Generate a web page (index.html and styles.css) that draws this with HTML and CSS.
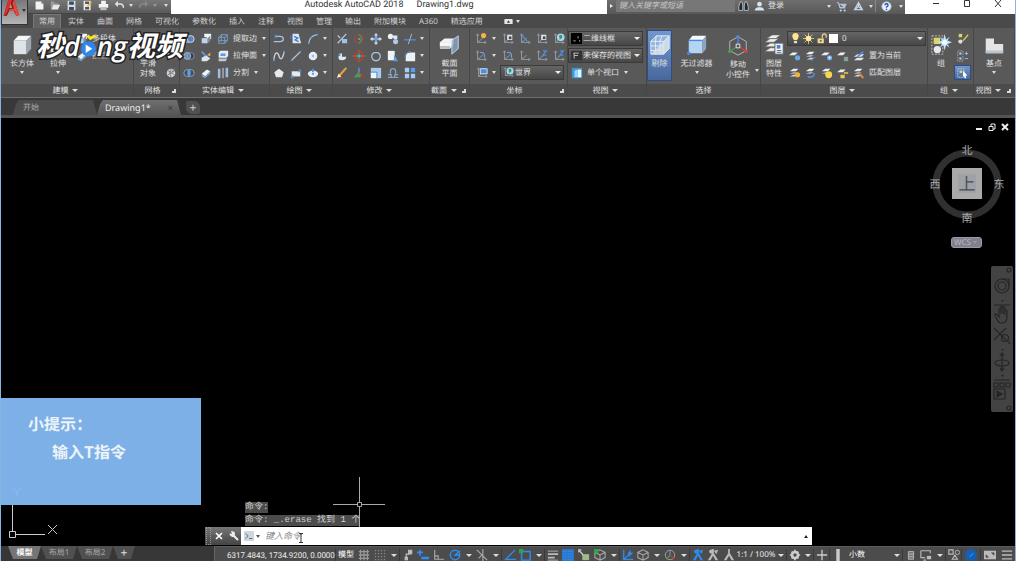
FILE: index.html
```
<!DOCTYPE html>
<html lang="zh-CN">
<head>
    <meta charset="UTF-8">
    <meta name="viewport" content="width=device-width, initial-scale=1.0">
    <title>Autodesk AutoCAD 2018 - Drawing1.dwg</title>
    <link rel="stylesheet" href="styles.css">
</head>
<body>
    <!-- icon sprite -->
    <svg class="sprite" aria-hidden="true">
        <symbol id="new" viewBox="0 0 14 14"><path fill="#f4f4f4" d="M2 2h7l3 3v7H2z"/><path fill="#aaa" d="M9 2v3h3z"/></symbol>
        <symbol id="open" viewBox="0 0 14 14"><path fill="#9a9a9a" d="M1 2h4l1 2h5v2H4l-2 6H1z"/><path fill="#e8e8e8" d="M4 6h9l-3 6H2z"/></symbol>
        <symbol id="save" viewBox="0 0 14 14"><path fill="#d4dbe4" d="M2 1h10v12H2z"/><path fill="#3b4a5c" d="M4 2h6v4H4zM4 9h6v4H4z"/></symbol>
        <symbol id="saveas" viewBox="0 0 14 14"><path fill="#e6e6e6" d="M2 1h9v12H2z"/><path fill="#555" d="M4 2h5v3H4zM4 9h5v3H4z"/><path stroke="#f0b040" stroke-width="2" d="M7 8l5-5"/></symbol>
        <symbol id="print" viewBox="0 0 14 14"><path fill="#f5f5f5" d="M4 1h6v4H4zM1 5h12v5H1z"/><path fill="#bbb" d="M3 9h8v4H3z"/></symbol>
        <symbol id="undo" viewBox="0 0 14 14"><path fill="none" stroke="currentColor" stroke-width="2" d="M3 5h5q4 0 4 5"/><path fill="currentColor" d="M1 5l4-4v8z"/></symbol>
        <symbol id="redo" viewBox="0 0 14 14"><path fill="none" stroke="#888" stroke-width="2" d="M11 5H6q-4 0-4 5"/><path fill="#888" d="M13 5L9 1v8z"/></symbol>
        <symbol id="bino" viewBox="0 0 14 14"><path fill="#202830" stroke="#ccd4dc" d="M3 1h2l1 4v7H1V7zM9 1h2l2 6v5H8V5z"/></symbol>
        <symbol id="user" viewBox="0 0 14 14"><circle cx="7" cy="4" r="3" fill="#d8e4f0"/><path fill="#d8e4f0" d="M1 12q0-3 4-4h4q4 1 4 4z"/></symbol>
        <symbol id="cart" viewBox="0 0 14 14"><path fill="#b9cbe0" stroke="#b9cbe0" d="M1 2h2l2 7h7M4 4h9l-2 4H5z"/><circle cx="6" cy="12" r="1.3" fill="#cde"/><circle cx="11" cy="12" r="1.3" fill="#cde"/></symbol>
        <symbol id="share" viewBox="0 0 14 14"><path fill="none" stroke="#c3d4ea" stroke-width="1.6" d="M7 2L2 11h10zM7 2v5M2 11l5-4 5 4"/></symbol>
        <symbol id="help" viewBox="0 0 14 14"><circle cx="7" cy="7" r="6" fill="#e9f1fb" stroke="#9bb5d6"/><path fill="none" stroke="#24509a" stroke-width="1.7" d="M5 5.5q0-2 2-2t2 2q0 1-2 2.200v1M7 9.800v1.500"/></symbol>

        <symbol id="box" viewBox="0 0 24 24"><path fill="#f5f7f9" d="M3 7l5-5h14l-5 5z"/><path fill="#dfe4e9" d="M3 7h14v15H3z"/><path fill="#9da5ae" d="M17 7l5-5v14l-5 6z"/></symbol>
        <symbol id="extrude" viewBox="0 0 24 24"><path fill="#dfe4e9" d="M4 15h12v7H4z"/><path fill="#9bb9dd" d="M5 8l4-5h11l-4 5v7H5z"/></symbol>
        <symbol id="section" viewBox="0 0 24 24"><path fill="#f3f3f3" d="M1 9l5-4h10v6l-4 5H1z"/><path fill="#b9bec4" d="M1 9h11v7H1z"/><path fill="#f7f7f7" d="M1 9h11v4H1z"/><path fill="#8aa5c4" fill-opacity=".8" stroke="#c9d8e8" d="M14 7l7-5v14l-7 6z"/></symbol>
        <symbol id="cull" viewBox="0 0 24 24"><path fill="#93b4dd" stroke="#e9f1fb" d="M2 8l6-6h14v14l-6 6H2zM2 8h14v14M16 8l6-6M7 8v14M2 13h14M2 18h14M12 8v14M8 2L7 8M14 2l-2 6"/><path fill="#dde2e8" d="M2 22L16 8v14zM16 8l6-6v14l-6 6z" fill-opacity=".8"/></symbol>
        <symbol id="nofilter" viewBox="0 0 24 24"><path fill="#f4f8fb" d="M3 7l4-5h15l-4 5z"/><path fill="#b5d4f2" d="M3 7h15v14H3z"/><path fill="#8ea6bd" d="M18 7l4-5v14l-4 5z"/><path stroke="#3e8de8" stroke-width="1.500" d="M3 7h15"/><circle cx="3" cy="21" r="2" fill="#3e8de8"/></symbol>
        <symbol id="gizmo" viewBox="0 0 24 24"><path fill="none" stroke="#bbb" d="M12 2l9 5v10l-9 5-9-5V7z"/><path stroke="#4f86d8" stroke-width="1.500" d="M12 12V2"/><path stroke="#4b9b4b" stroke-width="1.500" d="M12 12l-9 6"/><path stroke="#c9463c" stroke-width="1.500" d="M12 12l9 6"/><path fill="#555" stroke="#eee" d="M10 10h4v4h-4z"/><circle cx="12" cy="2" r="2" fill="#4f86d8"/><circle cx="3" cy="18" r="2" fill="#4b9b4b"/><circle cx="21" cy="18" r="2" fill="#c9463c"/></symbol>
        <symbol id="layerprop" viewBox="0 0 24 24"><path fill="#eee" stroke="#666" stroke-width=".7" d="M2 14l6-4h9l-5 4zM2 9l6-4h9l-5 4zM4 5l6-4h9l-5 4zM2 19l6-4h7l-3 4z"/><path fill="#f5f5f5" stroke="#567" d="M13 10h9v12h-9z"/><path fill="#4a86d0" d="M15 12h4v4h-4z"/><path stroke="#567" d="M15 18h5M15 20h5"/></symbol>
        <symbol id="group" viewBox="0 0 24 24"><path fill="none" stroke="#ccc" stroke-dasharray="2 1.500" d="M2 2h12v20H2z"/><path fill="#d8d668" d="M4 4h7v7H4z"/><circle cx="8" cy="17" r="4" fill="#e6eaef"/><path fill="#bfe6ff" d="M16 0l1.500 6 4-3-2.500 4 5 2-5 2 2.500 4-4-3L16 18l-1.500-6-4 3 2.500-4-5-2 5-2-2.500-4 4 3z"/><circle cx="16" cy="9" r="2.500" fill="#fff"/></symbol>
        <symbol id="base" viewBox="0 0 24 24"><path fill="#e2e5e8" d="M3 5h9v6h10v10H3z"/><path fill="#bfc4ca" d="M3 18h19v3H3z"/></symbol>

        <symbol id="cube" viewBox="0 0 14 14"><path fill="none" stroke="#7fa6d6" d="M2 5l3-3h7v7l-3 3H2zM2 5h7v7M9 5l3-3M5 2v7H2M5 9h7"/></symbol>
        <symbol id="solid" viewBox="0 0 14 14"><path fill="#f5f5f5" d="M5 1h8v6H8V5H5z"/><path fill="#bed4ec" d="M2 6h7v6H2z"/><path fill="#7d90a5" d="M9 6l3-3v6l-3 3z"/></symbol>
        <symbol id="face" viewBox="0 0 14 14"><path fill="#e8eef5" d="M2 3l2-2h9v6l-2 2H2z"/><path fill="#5f9be0" d="M4 4h6v3H4z"/><path fill="#bfc9d4" d="M2 10h10l-2 3H2z"/></symbol>
        <symbol id="split" viewBox="0 0 14 14"><path fill="#9dbbe0" d="M1 2h3v11H1zM10 1h3v11h-3z"/><path stroke="#eee" d="M7 1v12"/></symbol>
        <symbol id="union" viewBox="0 0 14 14"><circle cx="5" cy="7" r="4" fill="#5f84b5" stroke="#dbe7f5"/><circle cx="9" cy="7" r="4" fill="#5f84b5" stroke="#dbe7f5"/></symbol>
        <symbol id="subtract" viewBox="0 0 14 14"><circle cx="9" cy="7" r="4" fill="#39404a" stroke="#7d98bb"/><circle cx="5" cy="7" r="4" fill="#8bb0df" fill-opacity=".6" stroke="#9dbbe0"/></symbol>
        <symbol id="intersect" viewBox="0 0 14 14"><rect x="1" y="3" width="12" height="8" rx="4" fill="#444c57" stroke="#9aaabd"/><ellipse cx="7" cy="7" rx="2" ry="4" fill="#5b9ff0"/></symbol>
        <symbol id="slice" viewBox="0 0 14 14"><path fill="#dde5ee" d="M2 9l5-3 5 4-4 3H2z"/><path stroke="#5b9ff0" stroke-width="2" d="M2 2l5 5"/><path fill="#e2b060" d="M8 6l4-3v4z"/></symbol>
        <symbol id="thicken" viewBox="0 0 14 14"><path fill="#edf2f7" d="M2 8l6-5 4 2-6 6z"/><path fill="#6f9fda" d="M2 9l4 2 6-6v3l-6 5-4-2z"/></symbol>
        <symbol id="mesh" viewBox="0 0 14 14"><circle cx="7" cy="7" r="5" fill="#ccd2d8"/><path stroke="#777" fill="none" d="M3 4q4 4 8 1M3 10q4-5 8-1M7 2q-3 5 0 10M12 1l-4 5"/></symbol>
        <symbol id="meshred" viewBox="0 0 14 14"><circle cx="6" cy="7" r="4" fill="#ccd2d8"/><path fill="#d04030" d="M9 7h4v4z"/></symbol>

        <symbol id="pline" viewBox="0 0 14 14"><path fill="none" stroke="#a9c3e6" stroke-width="1.500" d="M1 10h7q4 0 4-3T8 4H3"/><path stroke="#4d8fe0" stroke-width="2" d="M3 2v4"/></symbol>
        <symbol id="helix" viewBox="0 0 14 14"><path fill="#dbe6f2" d="M3 1h7l3 11H3z"/><path fill="none" stroke="#3f7ac8" stroke-width="1.500" d="M5 4l4 2-3 2 4 2M1 3v4"/></symbol>
        <symbol id="arc" viewBox="0 0 14 14"><path fill="none" stroke="#b6c2d0" stroke-width="1.500" d="M2 12Q3 3 12 2"/><path fill="#4d8fe0" d="M1 11h2v2H1zM4 4h2v2H4zM11 1h2v2h-2z"/></symbol>
        <symbol id="spline" viewBox="0 0 14 14"><path fill="none" stroke="#c8d2dd" stroke-width="1.500" d="M1 12C2 0 6 3 7 7s4 6 6-5"/><path fill="#4d8fe0" d="M0 11h2v2H0zM12 1h2v2h-2z"/></symbol>
        <symbol id="line" viewBox="0 0 14 14"><path stroke="#b6c2d0" stroke-width="1.500" d="M2 12L12 2"/><path fill="#4d8fe0" d="M1 11h2v2H1zM11 1h2v2h-2z"/></symbol>
        <symbol id="circle" viewBox="0 0 14 14"><circle cx="7" cy="7" r="5" fill="#e5edf6"/><circle cx="7" cy="7" r="1.500" fill="#8bbcf3"/></symbol>
        <symbol id="polygon" viewBox="0 0 14 14"><path fill="#e5eaf0" d="M7 2l5.500 4-2 6h-7l-2-6z"/></symbol>
        <symbol id="rect" viewBox="0 0 14 14"><path fill="#e5eaf0" d="M2 5h10v6H2z"/><path fill="#4d8fe0" d="M10 3h3v3h-3zM1 10h3v3H1z"/></symbol>
        <symbol id="ellipse" viewBox="0 0 14 14"><ellipse cx="7" cy="8" rx="6" ry="4" fill="#e5edf6"/><path fill="#4d8fe0" d="M6 2h2v4H6zM6 7h2v2H6z"/></symbol>

        <symbol id="erase" viewBox="0 0 14 14"><path stroke="#bcc7d4" stroke-width="1.500" d="M2 12L12 1M2 3l3 3"/><path fill="#9dc1ee" d="M7 7h6v5H7z"/></symbol>
        <symbol id="rot3d" viewBox="0 0 14 14"><circle cx="7" cy="7" r="5" fill="none" stroke="#a34840" stroke-width="1.500"/><path fill="none" stroke="#4f9d55" stroke-width="1.500" d="M7 2q6 4 0 10"/><path fill="#9aa" d="M6 6h2v2H6z"/></symbol>
        <symbol id="move" viewBox="0 0 14 14"><path fill="#cfdbe8" d="M7 0l2.500 3h-5zM7 14l2.500-3h-5zM0 7l3-2.500v5zM14 7l-3-2.500v5z"/><path stroke="#cfdbe8" stroke-width="1.500" d="M7 2v10M2 7h10"/><path fill="#5b9ff0" d="M5 5h4v4H5z"/></symbol>
        <symbol id="copy" viewBox="0 0 14 14"><circle cx="4" cy="4" r="3" fill="#eef2f6"/><circle cx="10" cy="10" r="3" fill="#a9c9f0"/><path fill="#dfe6ee" d="M6 3h6v4H8z"/></symbol>
        <symbol id="trim" viewBox="0 0 14 14"><path stroke="#4d8fe0" stroke-width="1.500" d="M0 8h14"/><path stroke="#b6c2d0" d="M9 1L5 13"/></symbol>
        <symbol id="lshape" viewBox="0 0 14 14"><path fill="#e0e7ef" d="M4 4h3v4h5q0 4-5 4T3 8z"/><path fill="#4d8fe0" d="M3 4h2v3H3z"/></symbol>
        <symbol id="gizred" viewBox="0 0 14 14"><path stroke="#4f9d55" stroke-width="1.500" d="M7 0v14M0 7h14"/><circle cx="7" cy="7" r="5" fill="none" stroke="#c6372e" stroke-width="2"/><path fill="#5b9ff0" d="M5.500 5.500h3v3h-3z"/></symbol>
        <symbol id="rotate" viewBox="0 0 14 14"><path fill="none" stroke="#a9c0da" stroke-width="1.600" d="M5 3a5 5 0 1 0 4 0z"/></symbol>
        <symbol id="mirror" viewBox="0 0 14 14"><path fill="#f1f4f7" d="M1 1h8v11H1z"/><path fill="#5b9ff0" d="M8 5l5 8H8z"/></symbol>
        <symbol id="fillet" viewBox="0 0 14 14"><path fill="#edf1f5" d="M2 13V8q0-5 6-5h5v10z"/><path fill="none" stroke="#4d8fe0" d="M1 9q0-7 7-7"/></symbol>
        <symbol id="brush" viewBox="0 0 14 14"><path stroke="#e9a23b" stroke-width="2.500" d="M4 10l8-9"/><path fill="#eee" d="M1 13l2-5 3 3z"/><path fill="#c94a3a" d="M2 12h6v1H2z"/></symbol>
        <symbol id="axis3" viewBox="0 0 14 14"><path stroke="#4d8fe0" stroke-width="2" d="M7 7V1"/><path stroke="#4f9d55" stroke-width="2" d="M7 7l-5 5"/><path stroke="#c6372e" stroke-width="2" d="M7 7l6 5"/><path fill="#4f9d55" d="M4 8h5v4H4z"/></symbol>
        <symbol id="scale" viewBox="0 0 14 14"><path fill="#a9c9f0" d="M1 1h12v12H1z"/><path fill="#eef3f8" d="M1 6h7v7H1z"/><path stroke="#4a7ab8" d="M1 6h7v7" fill="none"/></symbol>
        <symbol id="offset" viewBox="0 0 14 14"><path fill="none" stroke="#87a3c6" stroke-width="1.500" d="M4 8V5q0-3 3-3t3 3v3M1 12h12M1 9h4v3M13 9H9v3"/></symbol>
        <symbol id="array" viewBox="0 0 14 14"><path fill="#a9cbf5" d="M1 1h5v5H1zM1 8h5v5H1zM8 8h5v5H8z"/><path fill="#5b9ff0" d="M8 1h5v5H8z"/></symbol>

        <symbol id="ucs" viewBox="0 0 14 14"><path fill="none" stroke="#9aa3ad" d="M3 1v10h10M3 11l6-5M1.500 3L3 1l1.500 2M11 9.500l2 1.500-2 1.500"/></symbol>
        <symbol id="ucs-sun" viewBox="0 0 14 14"><use href="#ucs"/><circle cx="10" cy="3" r="3" fill="#f2b544"/></symbol>
        <symbol id="ucs-box" viewBox="0 0 14 14"><use href="#ucs"/><path fill="#dfe6ee" d="M6 2h6v6H6z"/><path fill="#444" d="M8 4h3v3H8z"/></symbol>
        <symbol id="ucs-line" viewBox="0 0 14 14"><use href="#ucs"/><path stroke="#4d8fe0" stroke-width="1.500" d="M3 2l7 8"/></symbol>
        <symbol id="ucs-globe" viewBox="0 0 14 14"><use href="#ucs"/><circle cx="9" cy="5" r="4.500" fill="#a6dbe6"/><path fill="#3e8f77" d="M7 3l3-1 1 3-3 3z"/></symbol>
        <symbol id="ucs-rot" viewBox="0 0 14 14"><use href="#ucs"/><path fill="none" stroke="#6ca0e0" stroke-width="1.500" d="M6 3q6-1 5 6"/></symbol>
        <symbol id="ucs-z" viewBox="0 0 14 14"><use href="#ucs"/><path fill="none" stroke="#4d8fe0" stroke-width="1.500" d="M8 1h4L8 6h4"/></symbol>
        <symbol id="ucs-view" viewBox="0 0 14 14"><use href="#ucs"/><path fill="#4d8fe0" stroke="#e8eef5" d="M5 2h8v6H5z"/></symbol>

        <symbol id="wire" viewBox="0 0 14 14"><path d="M0 0h14v14H0z"/><path stroke="#ccc" d="M3 10h3M9 4v3M11 9v2"/></symbol>
        <symbol id="views" viewBox="0 0 14 14"><path fill="#333" d="M0 1h14v12H0z"/><path fill="none" stroke="#ddd" d="M3 4h7M4 7h5M4 4v7"/></symbol>
        <symbol id="viewport" viewBox="0 0 14 14"><path fill="#3b97d8" d="M1 1h12v12H1z"/><path fill="#e6f5ff" d="M8 3h4v9H8z"/><path fill="#9dd6f7" d="M4 4l4-1v9H4z"/></symbol>

        <symbol id="bulb" viewBox="0 0 14 14"><path fill="#ffe48a" d="M7 0q4 0 4 4 0 2-2 5H5Q3 6 3 4q0-4 4-4z"/><path fill="#ddd" d="M5 10h4v3H5z"/></symbol>
        <symbol id="sun" viewBox="0 0 14 14"><path stroke="#f1d98c" d="M7 0v14M0 7h14M2 2l10 10M12 2L2 12"/><circle cx="7" cy="7" r="3.500" fill="#ffeaa0"/></symbol>
        <symbol id="lock" viewBox="0 0 14 14"><path fill="#f0d58a" d="M2 7h8v6H2z"/><path fill="none" stroke="#f0d58a" stroke-width="1.500" d="M8 7V4q0-3 2.500-3T13 4v2"/><path fill="#555" d="M5 9h2v2H5z"/></symbol>
        <symbol id="lay" viewBox="0 0 14 14"><path fill="#eceff2" d="M1 5l4-3h6L8 5z"/><path fill="#b7bdc4" d="M1 8l4-2h5L7 8z"/></symbol>
        <symbol id="lay-off" viewBox="0 0 14 14"><path fill="#eceff2" d="M0 6l4-3h6L7 6z"/><circle cx="10" cy="9" r="3" fill="#6fa8ec"/></symbol>
        <symbol id="lay-iso" viewBox="0 0 14 14"><use href="#lay"/><path fill="#d5d9dd" d="M2 11l4-2h5l-3 2z"/><path stroke="#4a7fc4" stroke-width="1.500" d="M7 13l5-5"/></symbol>
        <symbol id="lay-frz" viewBox="0 0 14 14"><use href="#lay-off"/><path stroke="#dcebfc" d="M10 7v4M8 9h4"/></symbol>
        <symbol id="lay-lck" viewBox="0 0 14 14"><path fill="#eceff2" d="M0 6l4-3h6L7 6z"/><path fill="#85a695" d="M8 8h5v5H8z"/></symbol>
        <symbol id="lay-cur" viewBox="0 0 14 14"><path fill="#dfe5eb" d="M1 8l4-3h8l-3 3zM1 12l4-3h8l-3 3z"/><path stroke="#4d8fe0" stroke-width="2" d="M5 8l7-6"/></symbol>
        <symbol id="lay-on" viewBox="0 0 14 14"><use href="#lay"/><path fill="#d5d9dd" d="M1 11l4-2h5l-3 2z"/><circle cx="10" cy="9" r="3" fill="#f3b23c"/></symbol>
        <symbol id="lay-un" viewBox="0 0 14 14"><use href="#lay"/><path fill="none" stroke="#4d8fe0" stroke-width="2" d="M3 11q7 3 8-4"/></symbol>
        <symbol id="lay-thaw" viewBox="0 0 14 14"><use href="#lay"/><circle cx="9" cy="9" r="4" fill="#f7d64a"/></symbol>
        <symbol id="lay-ulk" viewBox="0 0 14 14"><path fill="#eceff2" d="M0 6l4-3h6L7 6z"/><path fill="#efc94c" d="M4 9h5v4H4zM8 6h5v2H8z"/></symbol>
        <symbol id="lay-mat" viewBox="0 0 14 14"><use href="#lay"/><path fill="#d5d9dd" d="M1 11l4-2h5l-3 2z"/><path stroke="#dc8b37" stroke-width="2.500" d="M8 8l4 5"/></symbol>
        <symbol id="grp-edit" viewBox="0 0 14 14"><path fill="#d8d668" d="M2 1h4v4H2z"/><circle cx="4" cy="10" r="2.500" fill="#ddd"/><path stroke="#e6c25a" stroke-width="1.500" d="M7 9l6-7"/></symbol>
        <symbol id="grp-un" viewBox="0 0 14 14"><path fill="none" stroke="#aaa" stroke-dasharray="2 1" d="M1 1h6v12H1z"/><circle cx="4" cy="4" r="1.500" fill="#9fc4f2"/><circle cx="4" cy="10" r="1.500" fill="#9fc4f2"/><path stroke="#9fc4f2" d="M9 4h4M11 2v4M9 10h4"/></symbol>
        <symbol id="grp-sel" viewBox="0 0 14 14"><path fill="none" stroke="#b5cdee" stroke-dasharray="2 1" d="M1 2h7v10H1z"/><path fill="#d8d668" d="M3 4h3v3H3z"/><path fill="#fff" d="M7 4l5 6-2 .5L11 13H9L8 10.500l-1 1z"/></symbol>

        <!-- status bar -->
        <symbol id="s-grid" viewBox="0 0 14 14"><path stroke="#999" stroke-width="1.500" d="M1 3h12M1 7h12M1 11h12M3 1v12M7 1v12M11 1v12"/></symbol>
        <symbol id="s-snap" viewBox="0 0 14 14"><path stroke="#888" stroke-width="1.500" stroke-dasharray="1.500 2" d="M1 2h12M1 5.500h12M1 9h12M1 12.500h12"/></symbol>
        <symbol id="s-infer" viewBox="0 0 14 14"><path fill="none" stroke="#bbb" stroke-width="1.500" d="M5 13V6h4V2"/><path fill="#bbb" d="M7 1h5v5H7zM3 9h4v4H3z"/></symbol>
        <symbol id="s-dyn" viewBox="0 0 14 14"><path stroke="#2d8df2" stroke-width="2" d="M0 4h7M3.500 1v7"/><path fill="#2d8df2" d="M5 9h9v3H5z"/></symbol>
        <symbol id="s-ortho" viewBox="0 0 14 14"><path fill="none" stroke="#aaa" stroke-width="1.300" d="M2 1v11h11M2 8h4v4"/></symbol>
        <symbol id="s-polar" viewBox="0 0 14 14"><circle cx="7" cy="7" r="5.500" fill="none" stroke="#2d8df2" stroke-width="1.700"/><path fill="none" stroke="#2d8df2" stroke-width="1.500" d="M13 2L7 7h6"/></symbol>
        <symbol id="s-iso" viewBox="0 0 14 14"><path stroke="#aaa" stroke-width="1.300" d="M1 1l12 12M8 0v14M3 11l5-5"/></symbol>
        <symbol id="s-track" viewBox="0 0 14 14"><path fill="none" stroke="#2d8df2" stroke-width="1.500" d="M13 1L2 12h12"/></symbol>
        <symbol id="s-osnap" viewBox="0 0 14 14"><path fill="none" stroke="#2d8df2" stroke-width="1.700" d="M3 3h10v10H3z"/><path fill="#28a745" d="M0 0h5v5H0z"/></symbol>
        <symbol id="s-lw" viewBox="0 0 14 14"><path stroke="#bbb" d="M1 2.500h12"/><path stroke="#bbb" stroke-width="2" d="M1 6h12M1 10h8"/><path stroke="#bbb" d="M1 13h12"/></symbol>
        <symbol id="s-trans" viewBox="0 0 14 14"><path fill="#2878d0" d="M0 0h14v14H0z"/><path stroke="#4a94e6" stroke-dasharray="1 1" d="M1 3h12M1 6h12M1 9h12M1 12h12"/></symbol>
        <symbol id="s-cyc" viewBox="0 0 14 14"><path fill="#9fb98a" d="M5 6h8v7H5z"/><path stroke="#ccc" stroke-width="1.500" d="M1 1l5 6M1 4V1h3"/></symbol>
        <symbol id="s-cube" viewBox="0 0 14 14"><path fill="none" stroke="#aaa" stroke-width="1.200" d="M7 1l6 3v6l-6 3-6-3V4zM1 4l6 3 6-3M7 7v6"/></symbol>
        <symbol id="s-3dosnap" viewBox="0 0 14 14"><use href="#s-cube"/><path fill="#28a745" d="M0 0h5v5H0z"/></symbol>
        <symbol id="s-ducs" viewBox="0 0 14 14"><path fill="none" stroke="#2d8df2" stroke-width="1.500" d="M2 1v11h11M2 12l7-6"/><path fill="#2d8df2" d="M10 1L6 6h3l-1 4 5-6h-3z"/></symbol>
        <symbol id="s-giz" viewBox="0 0 14 14"><circle cx="7" cy="7" r="5.500" fill="none" stroke="#aaa"/><path stroke="#4d8fe0" stroke-width="1.500" d="M7 2v5"/><path stroke="#4f9d55" stroke-width="1.500" d="M7 7l-4 5"/><path stroke="#c6372e" stroke-width="1.500" d="M7 7l5 5"/></symbol>
        <symbol id="s-ann" viewBox="0 0 14 14"><path fill="currentColor" d="M6 0h2v5l5 8h-3L7 8l-3 5H1l5-8z"/></symbol>
        <symbol id="s-annadd" viewBox="0 0 14 14"><use href="#s-ann"/><path fill="currentColor" d="M8 2l5-1-2 5z"/><circle cx="5" cy="3" r="2.500" fill="currentColor"/></symbol>
        <symbol id="s-gear" viewBox="0 0 14 14"><circle cx="7" cy="7" r="3.500" fill="none" stroke="#ccc" stroke-width="3"/><path stroke="#ccc" stroke-width="2" d="M7 1v2M7 11v2M1 7h2M11 7h2M3 3l1 1M11 3l-1 1M3 11l1-1M11 11l-1-1"/></symbol>
        <symbol id="s-plus" viewBox="0 0 14 14"><path stroke="#ccc" stroke-width="1.500" d="M7 1v12M1 7h12"/></symbol>
        <symbol id="s-units" viewBox="0 0 14 14"><path fill="#ccc" d="M5 0h4v14H5z"/></symbol>
        <symbol id="s-qp" viewBox="0 0 14 14"><path fill="#777" stroke="#bbb" d="M4 3h6v9H4z"/><path stroke="#bbb" d="M4 6h6M4 9h6"/></symbol>
        <symbol id="s-lockui" viewBox="0 0 14 14"><path fill="none" stroke="#bbb" stroke-width="1.300" d="M1 2h11v3M1 2v8h5M4 13h3"/><path fill="#bbb" d="M8 8h5v4H8z"/></symbol>
        <symbol id="s-isol" viewBox="0 0 14 14"><path fill="none" stroke="#bbb" stroke-width="1.300" d="M1 1h5v5H1zM5 12l3-5 3 5z"/><circle cx="11" cy="4" r="2.500" fill="none" stroke="#bbb"/></symbol>
        <symbol id="s-perf" viewBox="0 0 14 14"><circle cx="7" cy="7" r="7" fill="#1560b4"/><path fill="none" stroke="#4aa3ff" d="M5 9l5-4"/></symbol>
        <symbol id="s-full" viewBox="0 0 14 14"><path fill="#bbb" d="M0 2h14v10H0z"/><path fill="#444" d="M8 4h4v4zM2 6l4 4H2z"/></symbol>
        <symbol id="s-menu" viewBox="0 0 14 14"><path stroke="#bbb" stroke-width="1.700" d="M1 2.500h12M1 7h12M1 11.500h12"/></symbol>
    </svg>

    <div class="app">
        <header>
            <button class="app-button" aria-label="应用程序">
                <svg viewBox="0 0 20 24"><path fill="#8e1215" d="M6 0h7l7 19-4 1-3-6H7l-3 6H0z"/><path fill="#d8312c" d="M6 0h5l-7 17-4 3z"/><path fill="#e04a42" d="M8 11h6l1 3H6zM13 0l7 19-4 1-5-16z"/><path fill="#999" d="M9 4l2 6H7z"/></svg>
                <i class="arr"></i>
            </button>
            <div class="head-main">
                <div class="titlebar">
                    <div class="quick">
                        <button><svg><use href="#new"/></svg></button>
                        <button><svg><use href="#open"/></svg></button>
                        <button><svg><use href="#save"/></svg></button>
                        <button><svg><use href="#saveas"/></svg></button>
                        <button><svg><use href="#print"/></svg></button>
                        <button><svg><use href="#undo"/></svg></button>
                        <i class="arr"></i>
                        <button><svg><use href="#redo"/></svg></button>
                        <i class="arr dim"></i>
                        <i class="arr over"></i>
                    </div>
                    <div class="title"><span>Autodesk AutoCAD 2018</span><span>Drawing1.dwg</span></div>
                    <div class="info">
                        <button class="fold" aria-label="折叠"></button>
                        <input type="text" class="search" placeholder="键入关键字或短语" aria-label="搜索">
                        <button><svg><use href="#bino"/></svg></button>
                        <button class="login"><svg><use href="#user"/></svg>登录</button>
                        <i class="arr"></i>
                        <button><svg><use href="#cart"/></svg></button>
                        <button><svg><use href="#share"/></svg></button>
                        <i class="arr"></i>
                        <button class="help"><svg><use href="#help"/></svg></button>
                        <i class="arr"></i>
                    </div>
                    <div class="winbtns">
                        <button aria-label="最小化"><svg viewBox="0 0 8 8"><path d="M1 3.500h6"/></svg></button>
                        <button aria-label="最大化"><svg viewBox="0 0 8 8"><path d="M1.500.5h5v6h-5z"/></svg></button>
                        <button aria-label="关闭"><svg viewBox="0 0 8 8"><path d="M1 0l6 7M7 0L1 7"/></svg></button>
                    </div>
                </div>
                <nav class="tabs">
                    <a href="#" class="on">常用</a><a href="#">实体</a><a href="#">曲面</a><a href="#">网格</a><a href="#">可视化</a><a href="#">参数化</a><a href="#">插入</a><a href="#">注释</a><a href="#">视图</a><a href="#">管理</a><a href="#">输出</a><a href="#">附加模块</a><a href="#">A360</a><a href="#">精选应用</a>
                    <button class="cam" aria-label="功能区"><svg viewBox="0 0 10 6"><rect width="10" height="6" rx="1" fill="#e5e5e5"/><path fill="#444" d="M5 1.500l2 3H3z"/></svg><i class="arr"></i></button>
                </nav>
            </div>
        </header>

        <div class="ribbon">
            <section class="panel">
                <div class="body">
                    <button class="big"><svg><use href="#box"/></svg><span>长方体</span><i class="arr"></i></button>
                    <button class="big"><svg><use href="#extrude"/></svg><span>拉伸</span><i class="arr"></i></button>
                    <div class="rows">
                        <div class="row"><button class="txt"><svg><use href="#solid"/></svg>多段体</button></div>
                        <div class="row"><button class="txt"><svg><use href="#thicken"/></svg>按住</button></div>
                    </div>
                </div>
                <h3>建模<i class="arr"></i></h3>
            </section>
            <section class="panel">
                <div class="body">
                    <button class="big"><svg><use href="#mesh"/></svg><span>平滑<br>对象</span></button>
                    <div class="rows">
                        <div class="row"></div>
                        <div class="row"><button><svg><use href="#meshred"/></svg></button></div>
                        <div class="row"><button><svg><use href="#mesh"/></svg></button></div>
                    </div>
                </div>
                <h3 class="has-launch">网格<i class="launch"></i></h3>
            </section>
            <section class="panel">
                <div class="rows">
                    <div class="row"><button><svg><use href="#union"/></svg></button><button><svg><use href="#solid"/></svg></button><button class="txt"><svg><use href="#cube"/></svg>提取边</button><i class="arr"></i></div>
                    <div class="row"><button><svg><use href="#subtract"/></svg></button><button><svg><use href="#slice"/></svg></button><button class="txt"><svg><use href="#face"/></svg>拉伸面</button><i class="arr"></i></div>
                    <div class="row"><button><svg><use href="#intersect"/></svg></button><button><svg><use href="#thicken"/></svg></button><button class="txt"><svg><use href="#split"/></svg>分割</button><i class="arr"></i></div>
                </div>
                <h3>实体编辑<i class="arr"></i></h3>
            </section>
            <section class="panel">
                <div class="rows">
                    <div class="row"><button><svg><use href="#pline"/></svg></button><button><svg><use href="#helix"/></svg></button><button><svg><use href="#arc"/></svg></button><i class="arr"></i></div>
                    <div class="row"><button><svg><use href="#spline"/></svg></button><button><svg><use href="#line"/></svg></button><button><svg><use href="#circle"/></svg></button><i class="arr"></i></div>
                    <div class="row"><button><svg><use href="#polygon"/></svg></button><button><svg><use href="#rect"/></svg></button><button><svg><use href="#ellipse"/></svg></button><i class="arr"></i></div>
                </div>
                <h3>绘图<i class="arr"></i></h3>
            </section>
            <section class="panel">
                <div class="rows">
                    <div class="row"><button><svg><use href="#erase"/></svg></button><button><svg><use href="#rot3d"/></svg></button><button><svg><use href="#move"/></svg></button><button><svg><use href="#copy"/></svg></button><button><svg><use href="#trim"/></svg></button><i class="arr"></i></div>
                    <div class="row"><button><svg><use href="#lshape"/></svg></button><button><svg><use href="#gizred"/></svg></button><button><svg><use href="#rotate"/></svg></button><button><svg><use href="#mirror"/></svg></button><button><svg><use href="#fillet"/></svg></button><i class="arr"></i></div>
                    <div class="row"><button><svg><use href="#brush"/></svg></button><button><svg><use href="#axis3"/></svg></button><button><svg><use href="#scale"/></svg></button><button><svg><use href="#offset"/></svg></button><button><svg><use href="#array"/></svg></button><i class="arr"></i></div>
                </div>
                <h3>修改<i class="arr"></i></h3>
            </section>
            <section class="panel">
                <div class="body center">
                    <button class="big"><svg><use href="#section"/></svg><span>截面<br>平面</span></button>
                </div>
                <h3 class="has-launch">截面<i class="arr"></i><i class="launch"></i></h3>
            </section>
            <section class="panel">
                <div class="rows pad">
                    <div class="row"><button><svg><use href="#ucs-sun"/></svg></button><i class="arr wide"></i><button><svg><use href="#ucs-box"/></svg></button><button><svg><use href="#ucs-line"/></svg></button><button><svg><use href="#ucs-box"/></svg></button><button><svg><use href="#ucs-globe"/></svg></button></div>
                    <div class="row"><button><svg><use href="#ucs-rot"/></svg></button><i class="arr wide"></i><button><svg><use href="#ucs-rot"/></svg></button><button><svg><use href="#ucs"/></svg></button><button><svg><use href="#ucs-z"/></svg></button><button><svg><use href="#ucs-z"/></svg></button></div>
                    <div class="row"><button><svg><use href="#ucs-view"/></svg></button><i class="arr wide"></i><label class="combo"><svg><use href="#ucs-globe"/></svg><select aria-label="坐标系"><option>世界</option></select></label></div>
                </div>
                <h3 class="has-launch">坐标<i class="launch"></i></h3>
            </section>
            <section class="panel">
                <div class="rows">
                    <div class="row"><label class="combo"><svg><use href="#wire"/></svg><select aria-label="视觉样式"><option>二维线框</option></select></label></div>
                    <div class="row"><label class="combo"><svg><use href="#views"/></svg><select aria-label="命名视图"><option>未保存的视图</option></select></label></div>
                    <div class="row"><button class="txt"><svg><use href="#viewport"/></svg>单个视口</button><i class="arr"></i></div>
                </div>
                <h3>视图<i class="arr"></i></h3>
            </section>
            <section class="panel">
                <div class="body spread">
                    <button class="big active"><svg><use href="#cull"/></svg><span>剔除</span></button>
                    <button class="big"><svg><use href="#nofilter"/></svg><span>无过滤器</span><i class="arr"></i></button>
                    <div class="split">
                        <button class="big"><svg><use href="#gizmo"/></svg><span>移动<br>小控件</span></button>
                        <i class="arr"></i>
                    </div>
                </div>
                <h3>选择</h3>
            </section>
            <section class="panel">
                <div class="body">
                    <button class="big layer"><svg><use href="#layerprop"/></svg><span>图层<br>特性</span></button>
                    <div class="rows tight">
                        <div class="row"><label class="combo layers"><svg><use href="#bulb"/></svg><svg><use href="#sun"/></svg><svg><use href="#lock"/></svg><b class="swatch"></b><select aria-label="图层"><option>0</option></select></label></div>
                        <div class="row"><button><svg><use href="#lay-off"/></svg></button><button><svg><use href="#lay-iso"/></svg></button><button><svg><use href="#lay-frz"/></svg></button><button><svg><use href="#lay-lck"/></svg></button><button class="txt"><svg><use href="#lay-cur"/></svg>置为当前</button></div>
                        <div class="row"><button><svg><use href="#lay-on"/></svg></button><button><svg><use href="#lay-un"/></svg></button><button><svg><use href="#lay-thaw"/></svg></button><button><svg><use href="#lay-ulk"/></svg></button><button class="txt"><svg><use href="#lay-mat"/></svg>匹配图层</button></div>
                    </div>
                </div>
                <h3>图层<i class="arr"></i></h3>
            </section>
            <section class="panel">
                <div class="body">
                    <button class="big"><svg><use href="#group"/></svg><span>组</span></button>
                    <div class="rows">
                        <div class="row"><button><svg><use href="#grp-edit"/></svg></button></div>
                        <div class="row"><button><svg><use href="#grp-un"/></svg></button></div>
                        <div class="row"><button class="active"><svg><use href="#grp-sel"/></svg></button></div>
                    </div>
                </div>
                <h3>组<i class="arr"></i></h3>
            </section>
            <section class="panel">
                <div class="body center">
                    <button class="big"><svg><use href="#base"/></svg><span>基点</span><i class="arr"></i></button>
                </div>
                <h3 class="has-launch">视图<i class="arr"></i><i class="launch"></i></h3>
            </section>
            <div class="watermark"><span>秒</span><span class="latin">d</span><svg viewBox="0 0 18 24"><circle cx="9" cy="15" r="8" fill="#2f86e8"/><path fill="#fff" d="M6 10.500l7 4.500-7 4.500z"/><path fill="none" stroke="#f8e71c" stroke-width="3" d="M8 1l3 3 5-3"/></svg><span class="latin">ng</span><span>视频</span></div>
        </div>

        <div class="filetabs">
            <a href="#" class="file">开始</a>
            <a href="#" class="file on">Drawing1*<span>×</span></a>
            <button aria-label="新图形">+</button>
        </div>

        <main class="canvas">
            <div class="docbtns">
                <button aria-label="最小化"><svg viewBox="0 0 8 8"><path d="M1 6h6" stroke-width="2"/></svg></button>
                <button aria-label="还原"><svg viewBox="0 0 8 8"><path d="M1 3.500h4v4H1zM3 3V1h4v5H5"/></svg></button>
                <button aria-label="关闭"><svg viewBox="0 0 8 8"><path d="M1 1l6 6M7 1L1 7" stroke-width="2"/></svg></button>
            </div>
            <svg class="viewcube" viewBox="0 0 76 84">
                <circle cx="38" cy="42" r="31" fill="none" stroke="#303030" stroke-width="7"/>
                <path fill="#aaa" d="M23 26h30v31H23z"/><path fill="#9ea2a7" d="M29 32h18v19H29z"/>
                <text x="38" y="48" class="top">上</text>
                <text x="38" y="12">北</text><text x="38" y="80">南</text><text x="6" y="46">西</text><text x="70" y="46">东</text>
            </svg>
            <button class="wcs">WCS<i class="arr dim"></i></button>
            <div class="navbar">
                <svg viewBox="0 0 22 146"><g fill="none" stroke="#252525" stroke-width="1.200">
                    <circle cx="18" cy="4" r="2"/><circle cx="11" cy="20" r="7"/><circle cx="11" cy="20" r="4"/><path d="M11 13h7v7M3 39h16M3 114h16"/>
                    <path d="M7 55q-4-6-3-7t4 3v-8q1-2 2 0v5-7q1-2 2 0v7-6q1-2 2 0v7-4q2-2 2 0v6q0 5-4 6h-3z"/>
                    <path d="M3 62l12 12M15 62L3 74"/><circle cx="14" cy="72" r="3.500"/><path d="M16 74l3 4"/>
                    <ellipse cx="11" cy="97" rx="7" ry="3"/><path d="M11 88v16M9 90l2-3 2 3M9 102l2 3 2-3"/>
                    <path d="M3 117h4v4H3zM9 117h4v4H9zM15 117h4v4h-4zM3 123h11v10H3z"/><path fill="#252525" d="M6 125l5 3-5 3z"/><circle cx="18" cy="142" r="2"/></g>
                    <path fill="#252525" d="M10 34h3l-1.500 2zM10 83h3l-1.500 2zM10 109h3l-1.500 2z"/>
                </svg>
            </div>

            <svg class="ucsicon" viewBox="0 0 60 56"><path fill="none" stroke="#ccc" d="M11.500 10v34M15 47.500h29M8.500 44.500h6v6h-6zM47 38l9 9M56 38l-9 9"/></svg>
            <div class="tip"><p>小提示：</p><p class="in">输入T指令</p><svg viewBox="0 0 8 8"><path fill="none" stroke="#90bdea" d="M0 0l4 4 4-4M4 4v4"/></svg></div>

            <div class="history"><span>命令:</span><span>命令: _.erase 找到 1 个</span></div>
            <svg class="cross" viewBox="0 0 52 50"><path fill="none" stroke="#aaa" d="M0 27.500h24M29 27.500h23M26.500 0v25M26.500 30v20M24.500 25.500h4v4h-4z"/></svg>
            <div class="cmd">
                <span class="grip"></span>
                <button aria-label="关闭"><svg viewBox="0 0 10 10"><path stroke="#fff" stroke-width="1.700" d="M2 2l6 6M8 2L2 8"/></svg></button>
                <button aria-label="自定义"><svg viewBox="0 0 10 10"><path stroke="#eee" stroke-width="2" d="M4 4l5 5"/><path fill="none" stroke="#eee" stroke-width="1.500" d="M1 3l2 1 1-1-1-2q3 0 2 3T1 3z"/></svg></button>
                <div class="field">
                    <svg viewBox="0 0 12 12"><rect width="12" height="12" rx="1" fill="#d0d6de"/><path fill="none" stroke="#4b5b70" d="M2 3l3 3-3 3M6 9h4"/></svg>
                    <i class="arr"></i>
                    <input type="text" placeholder="键入命令" aria-label="命令">
                    <i class="arr up"></i>
                    <svg class="caret" viewBox="0 0 6 10"><path fill="none" stroke="#333" d="M1 .5h4M3 1v8M1 9.500h4"/></svg>
                </div>
            </div>
        </main>

        <footer>
            <nav class="layouts"><a href="#" class="on">模型</a><a href="#">布局1</a><a href="#">布局2</a><a href="#" class="add">+</a></nav>
            <div class="status">
                <span class="coords">6317.4843, 1734.9200, 0.0000</span>
                <button class="word">模型</button>
                <button><svg><use href="#s-grid"/></svg></button>
                <button><svg><use href="#s-snap"/></svg></button><i class="arr"></i>
                <button class="sep"><svg><use href="#s-infer"/></svg></button>
                <button><svg><use href="#s-dyn"/></svg></button>
                <button><svg><use href="#s-ortho"/></svg></button>
                <button><svg><use href="#s-polar"/></svg></button><i class="arr"></i>
                <button><svg><use href="#s-iso"/></svg></button><i class="arr"></i>
                <button class="sep"><svg><use href="#s-track"/></svg></button>
                <button><svg><use href="#s-osnap"/></svg></button><i class="arr"></i>
                <button class="sep"><svg><use href="#s-lw"/></svg></button>
                <button><svg><use href="#s-trans"/></svg></button>
                <button><svg><use href="#s-cyc"/></svg></button>
                <button><svg><use href="#s-3dosnap"/></svg></button><i class="arr"></i>
                <button class="sep"><svg><use href="#s-ducs"/></svg></button>
                <button><svg><use href="#s-cube"/></svg></button><i class="arr"></i>
                <button><svg><use href="#s-giz"/></svg></button><i class="arr"></i>
                <button class="sep blue"><svg><use href="#s-annadd"/></svg></button>
                <button><svg><use href="#s-annadd"/></svg></button>
                <button><svg><use href="#s-ann"/></svg></button>
                <button class="zoom">1:1 / 100%</button><i class="arr"></i>
                <button class="sep"><svg><use href="#s-gear"/></svg></button><i class="arr"></i>
                <button class="sep"><svg><use href="#s-plus"/></svg></button>
                <button class="sep"><svg><use href="#s-units"/></svg></button>
                <button class="unit">小数</button><i class="arr"></i>
                <button class="sep"><svg><use href="#s-qp"/></svg></button>
                <button><svg><use href="#s-lockui"/></svg></button><i class="arr"></i>
                <button class="sep"><svg><use href="#s-isol"/></svg></button>
                <button class="sep last"><svg><use href="#s-perf"/></svg></button>
                <button class="sep last"><svg><use href="#s-full"/></svg></button>
                <button><svg><use href="#s-menu"/></svg></button>
            </div>
        </footer>
    </div>
</body>
</html>
```
FILE: styles.css
```
* {
    box-sizing: border-box;
}
body {
    margin: 0;
    font-family: "Noto Sans", "Noto Sans CJK SC", sans-serif;
    font-size: 8px;
    line-height: 10px;
    text-rendering: geometricPrecision;
    color: #e2e2e2;
    background: #000;
}
button, input, select {
    font: inherit;
    color: inherit;
    text-rendering: inherit;
    margin: 0;
    padding: 0;
    border: 0;
    background: none;
    outline: none;
}
button {
    display: flex;
    align-items: center;
    justify-content: center;
    white-space: nowrap;
}
a {
    color: inherit;
    text-decoration: none;
}
svg {
    display: block;
    flex: none;
}
.sprite {
    position: absolute;
    width: 0;
    height: 0;
}
.app {
    display: flex;
    flex-direction: column;
    height: 100vh;
    border-left: 1px solid #86b4dc;
    border-right: 1px solid #86b4dc;
    overflow: hidden;
}

/* small triangles */
.arr {
    display: flex;
    align-items: center;
    justify-content: center;
    flex: none;
    width: 8px;
}
.arr::before {
    content: "";
    border: 2px solid transparent;
    border-top: 3px solid #ddd;
    border-bottom: 0;
}
.arr.dim::before {
    border-top-color: #999;
}
.arr.up::before {
    border-top: 0;
    border-bottom: 3px solid #222;
}

/* title bar and ribbon tabs */
header {
    display: flex;
    height: 28px;
    background: #4a4a4a;
}
.app-button {
    width: 27px;
    height: 25px;
    background: linear-gradient(#777, #b5b5b5);
    border: 1px solid #333;
    border-top: 0;
    justify-content: flex-start;
    align-items: flex-start;
}
.app-button svg {
    width: 19px;
    height: 19px;
}
.app-button .arr {
    width: 6px;
    height: 20px;
}
.app-button .arr::before {
    border-top-color: #333;
}
.head-main {
    flex: 1;
    min-width: 0;
}
.titlebar {
    display: flex;
    height: 14px;
    background: #fff;
}
.quick {
    display: flex;
    width: 143px;
    height: 14px;
    padding: 0 0 3px 3px;
    background: linear-gradient(#777, #5a5a5a);
    border-bottom: 1px solid #444;
}
.quick button {
    width: 16px;
}
.quick svg {
    width: 11px;
    height: 11px;
}
.quick .over {
    margin-left: 3px;
}
.title {
    flex: 1;
    display: flex;
    justify-content: center;
    gap: 13px;
    font-family: Roboto, sans-serif;
    font-size: 9px;
    line-height: 10px;
    color: #333;
    white-space: nowrap;
}
.info {
    display: flex;
    width: 298px;
    height: 14px;
    padding-bottom: 2px;
    background: linear-gradient(#6e6e6e, #585858);
}
.info svg {
    width: 11px;
    height: 11px;
}
.info button {
    width: 17px;
}
.info .fold {
    width: 9px;
}
.fold::before {
    content: "";
    border: 2px solid transparent;
    border-left: 3px solid #eee;
    border-right: 0;
}
.search {
    width: 119px;
    padding: 0 3px;
    background: #777;
    font-style: italic;
}
.search::placeholder {
    color: #c4c4c4;
    opacity: 1;
}
.info .login {
    flex: 1;
    justify-content: flex-start;
    gap: 3px;
    padding-left: 2px;
}
.info .help {
    border-left: 1px solid #888;
    width: 22px;
}
.winbtns {
    display: flex;
    width: 110px;
    padding-left: 15px;
}
.winbtns button {
    width: 31px;
    height: 8px;
}
.winbtns svg, .docbtns svg {
    width: 8px;
    height: 8px;
    fill: none;
    stroke: #333;
}
.tabs {
    display: flex;
    gap: 1px;
    height: 14px;
    padding-left: 5px;
    line-height: 15px;
    color: #d0d0d0;
    white-space: nowrap;
}
.tabs a {
    padding: 0 6px;
}
.tabs .on {
    background: #636363;
    border: 1px solid #777;
    border-bottom: 0;
    padding: 0 5px;
    line-height: 13px;
}
.cam {
    margin-left: 14px;
}
.cam svg {
    width: 9px;
    height: 5px;
}
.cam .arr {
    width: 11px;
}

/* ribbon */
.ribbon {
    position: relative;
    display: grid;
    grid-template-columns: 133fr 46fr 90fr 63fr 97fr 40fr 98fr 79fr 114fr 167fr 46fr 41fr;
    height: 70px;
    background: #595959;
    border-bottom: 1px solid #6e6e6e;
}
.panel {
    display: flex;
    flex-direction: column;
    min-width: 0;
    border-right: 1px solid #474747;
    white-space: nowrap;
}
.panel h3 {
    position: relative;
    display: flex;
    align-items: center;
    justify-content: center;
    height: 13px;
    margin: 0;
    font-size: 8px;
    font-weight: normal;
    background: #4b4b4b;
}
.panel h3.has-launch {
    padding-right: 8px;
}
.panel h3 .arr {
    width: 13px;
}
.launch {
    position: absolute;
    right: 3px;
    top: 5px;
    width: 4px;
    height: 4px;
    border-right: 2px solid #ddd;
    border-bottom: 2px solid #ddd;
}
.panel .arr::before {
    border-width: 3px 2px 0;
}
.panel h3 .arr::before {
    border-width: 3px 3px 0;
}
.body {
    display: flex;
    height: 56px;
}
.body .rows {
    flex: 1;
    min-width: 0;
}
.center {
    justify-content: center;
}
.spread {
    justify-content: space-between;
}
.split {
    display: flex;
    align-items: flex-end;
    padding-right: 1px;
}
.split .arr {
    height: 28px;
    width: 4px;
}
.rows {
    height: 56px;
    padding-top: 2px;
}
.rows.pad {
    padding-left: 3px;
}
.row {
    display: flex;
    align-items: center;
    height: 17px;
}
.row button {
    width: 17px;
    height: 15px;
}
.row svg {
    width: 12px;
    height: 12px;
}
.row .txt {
    width: auto;
    gap: 4px;
    padding: 0 3px;
}
.arr.wide {
    margin-right: 2px;
}
.tight .row button {
    width: 16px;
}
.tight .row .txt {
    width: auto;
    padding: 0 2px;
}
.big {
    flex-direction: column;
    justify-content: flex-start;
    min-width: 34px;
    height: 53px;
    padding-top: 4px;
    margin-top: 2px;
}
.panel:nth-child(1) .big {
    min-width: 36px;
    padding-left: 6px;
}
.panel:nth-child(2) .big {
    min-width: 28px;
}
.panel:nth-child(11) .big {
    min-width: 26px;
}
.big svg {
    width: 22px;
    height: 22px;
    margin-bottom: 3px;
}
.big span {
    line-height: 10px;
}
.big .arr {
    height: 7px;
}
.big.active {
    min-width: 25px;
    height: 51px;
    padding-top: 3px;
}
.active, .row .active {
    background: linear-gradient(#7297cf, #48689c);
    border: 1px solid #2f4d7d;
}
.big.layer {
    min-width: 26px;
}
.combo {
    display: flex;
    align-items: center;
    flex: 1;
    min-width: 0;
    height: 15px;
    margin-right: 3px;
    padding: 0 2px;
    gap: 1px;
    background: linear-gradient(#656565, #474747);
    border: 1px solid #3a3a3a;
}
.combo::after {
    content: "";
    border: 3px solid transparent;
    border-top: 3px solid #eee;
    border-bottom: 0;
}
.combo select {
    appearance: none;
    flex: 1;
    min-width: 0;
}
.combo svg {
    width: 11px;
    height: 11px;
}
.layers {
    margin-right: 1px;
}
.layers svg {
    margin-right: 1px;
}
.swatch {
    width: 9px;
    height: 9px;
    margin-right: 3px;
    background: #fff;
}
.watermark {
    position: absolute;
    left: 35px;
    top: 3px;
    display: flex;
    align-items: center;
    font-size: 28px;
    line-height: 30px;
    font-weight: bold;
    font-style: italic;
    color: #fff;
    -webkit-text-stroke: 3px #222;
    paint-order: stroke fill;
}
.watermark .latin {
    font-family: "Open Sans", sans-serif;
    font-size: 27px;
    font-weight: 600;
}
.watermark svg {
    width: 17px;
    height: 24px;
}

/* drawing tabs */
.filetabs {
    display: flex;
    align-items: flex-end;
    height: 20px;
    padding-left: 12px;
    background: #383838;
    border-bottom: 3px solid #545454;
    color: #aaa;
}
.file {
    display: flex;
    justify-content: space-between;
    width: 84px;
    height: 15px;
    padding: 0 9px 0 10px;
    line-height: 15px;
    background: #4c4c4c;
    clip-path: polygon(6px 0, calc(100% - 4px) 0, 100% 100%, 0 100%, 3px 4px);
}
.file.on {
    padding: 0 8px;
    font-size: 9px;
    color: #eee;
    background: linear-gradient(#707070, #565656);
}
.file span {
    color: #333;
}
.filetabs button {
    width: 14px;
    height: 13px;
    margin: 0 0 1px 5px;
    font-size: 12px;
    border-radius: 2px 6px 2px 6px;
    background: #505050;
    color: #ccc;
}

/* drawing area, everything here floats over the model */
.canvas {
    position: relative;
    flex: 1;
    min-height: 0;
    background: #000;
}
.docbtns {
    position: absolute;
    right: 6px;
    top: 5px;
    display: flex;
    gap: 5px;
}
.docbtns svg {
    stroke: #eee;
}
.viewcube {
    position: absolute;
    right: 10px;
    top: 24px;
    width: 76px;
    height: 84px;
}
.viewcube text {
    font-size: 11px;
    fill: #aaa;
    text-anchor: middle;
}
.viewcube .top {
    font-size: 17px;
    fill: #4a4f55;
}
.wcs {
    position: absolute;
    right: 33px;
    top: 119px;
    width: 31px;
    height: 11px;
    border: 1px solid #9a9aaa;
    border-radius: 3px;
    background: #80808f;
    color: #bbb;
}
.navbar {
    position: absolute;
    right: 2px;
    top: 148px;
    width: 22px;
    height: 146px;
    border-radius: 2px;
    background: #434343;
}
.ucsicon {
    position: absolute;
    left: 0;
    bottom: 3px;
    width: 60px;
    height: 56px;
}
.tip {
    position: absolute;
    left: 0;
    bottom: 41px;
    width: 200px;
    height: 107px;
    padding: 13px 27px;
    background: #7cb0e7;
    color: #eef3f9;
    font-family: "Noto Sans CJK SC", sans-serif;
    font-size: 16px;
    font-weight: bold;
    line-height: 24px;
}
.tip p {
    margin: 0 0 4px;
}
.tip .in {
    padding-left: 24px;
}
.tip svg {
    position: absolute;
    left: 12px;
    bottom: 9px;
    width: 8px;
    height: 8px;
}
.history {
    position: absolute;
    left: 244px;
    bottom: 20px;
    display: flex;
    flex-direction: column;
    align-items: flex-start;
    gap: 2px;
    font-family: "Liberation Mono", "Noto Sans CJK SC", monospace;
    font-size: 9px;
    line-height: 11px;
    white-space: pre;
    color: #ccc;
}
.history span {
    background: #4c4c4c;
}
.cross {
    position: absolute;
    left: 332px;
    bottom: 19px;
    width: 52px;
    height: 50px;
}
.cmd {
    position: absolute;
    left: 204px;
    right: 20%;
    bottom: 1px;
    display: flex;
    height: 18px;
    background: linear-gradient(#777, #444);
}
.cmd svg {
    width: 10px;
    height: 10px;
}
.cmd button {
    width: 15px;
}
.grip {
    width: 5px;
    margin-left: 1px;
    border: 1px dotted #999;
}
.field {
    position: relative;
    flex: 1;
    display: flex;
    align-items: center;
    padding: 0 2px 0 3px;
    background: #fff;
}
.field .arr::before {
    border-top-color: #555;
}
.field .arr.up::before {
    border-top: 0;
}
.field input {
    flex: 1;
    padding-left: 3px;
    font-size: 9px;
    font-style: italic;
}
.field input::placeholder {
    color: #888;
    opacity: 1;
}
.field .caret {
    position: absolute;
    left: 57px;
    top: 6px;
    width: 6px;
}

/* status bar */
footer {
    display: flex;
    height: 15px;
    background: #373737;
}
.layouts {
    display: flex;
    width: 213px;
    padding-left: 7px;
    line-height: 13px;
    color: #aaa;
}
.layouts a {
    width: 36px;
    height: 13px;
    text-align: center;
    background: #505050;
    clip-path: polygon(0 0, 100% 0, calc(100% - 4px) 100%, 5px 100%);
}
.layouts .on {
    width: 33px;
    color: #fff;
    font-weight: bold;
    background: #757575;
}
.layouts .add {
    width: 22px;
    font-size: 12px;
    color: #ddd;
}
.status {
    flex: 1;
    display: flex;
    height: 15px;
    padding-top: 2px;
    background: #4c4c4c;
    border-left: 1px solid #666;
    border-top: 1px solid #5c5c5c;
    color: #eee;
}
.status button {
    width: 16px;
    color: #bbb;
}
.status .arr {
    width: 11px;
}
.status .arr::before {
    border-width: 3px 3px 0;
}
.status svg {
    width: 12px;
    height: 12px;
}
.status .sep {
    border-left: 1px solid #3a3a3a;
}
.status .last {
    width: 19px;
}
.status .blue {
    color: #2d8df2;
}
.coords {
    width: 120px;
    padding-left: 12px;
    font-family: Roboto, sans-serif;
    line-height: 13px;
    white-space: nowrap;
}
.status .word {
    width: 21px;
    color: #fff;
    border-left: 1px solid #3a3a3a;
}
.status .zoom {
    width: 38px;
    color: #eee;
}
.status .unit {
    flex: 1;
    justify-content: flex-start;
    padding-left: 4px;
    color: #fff;
}
```
